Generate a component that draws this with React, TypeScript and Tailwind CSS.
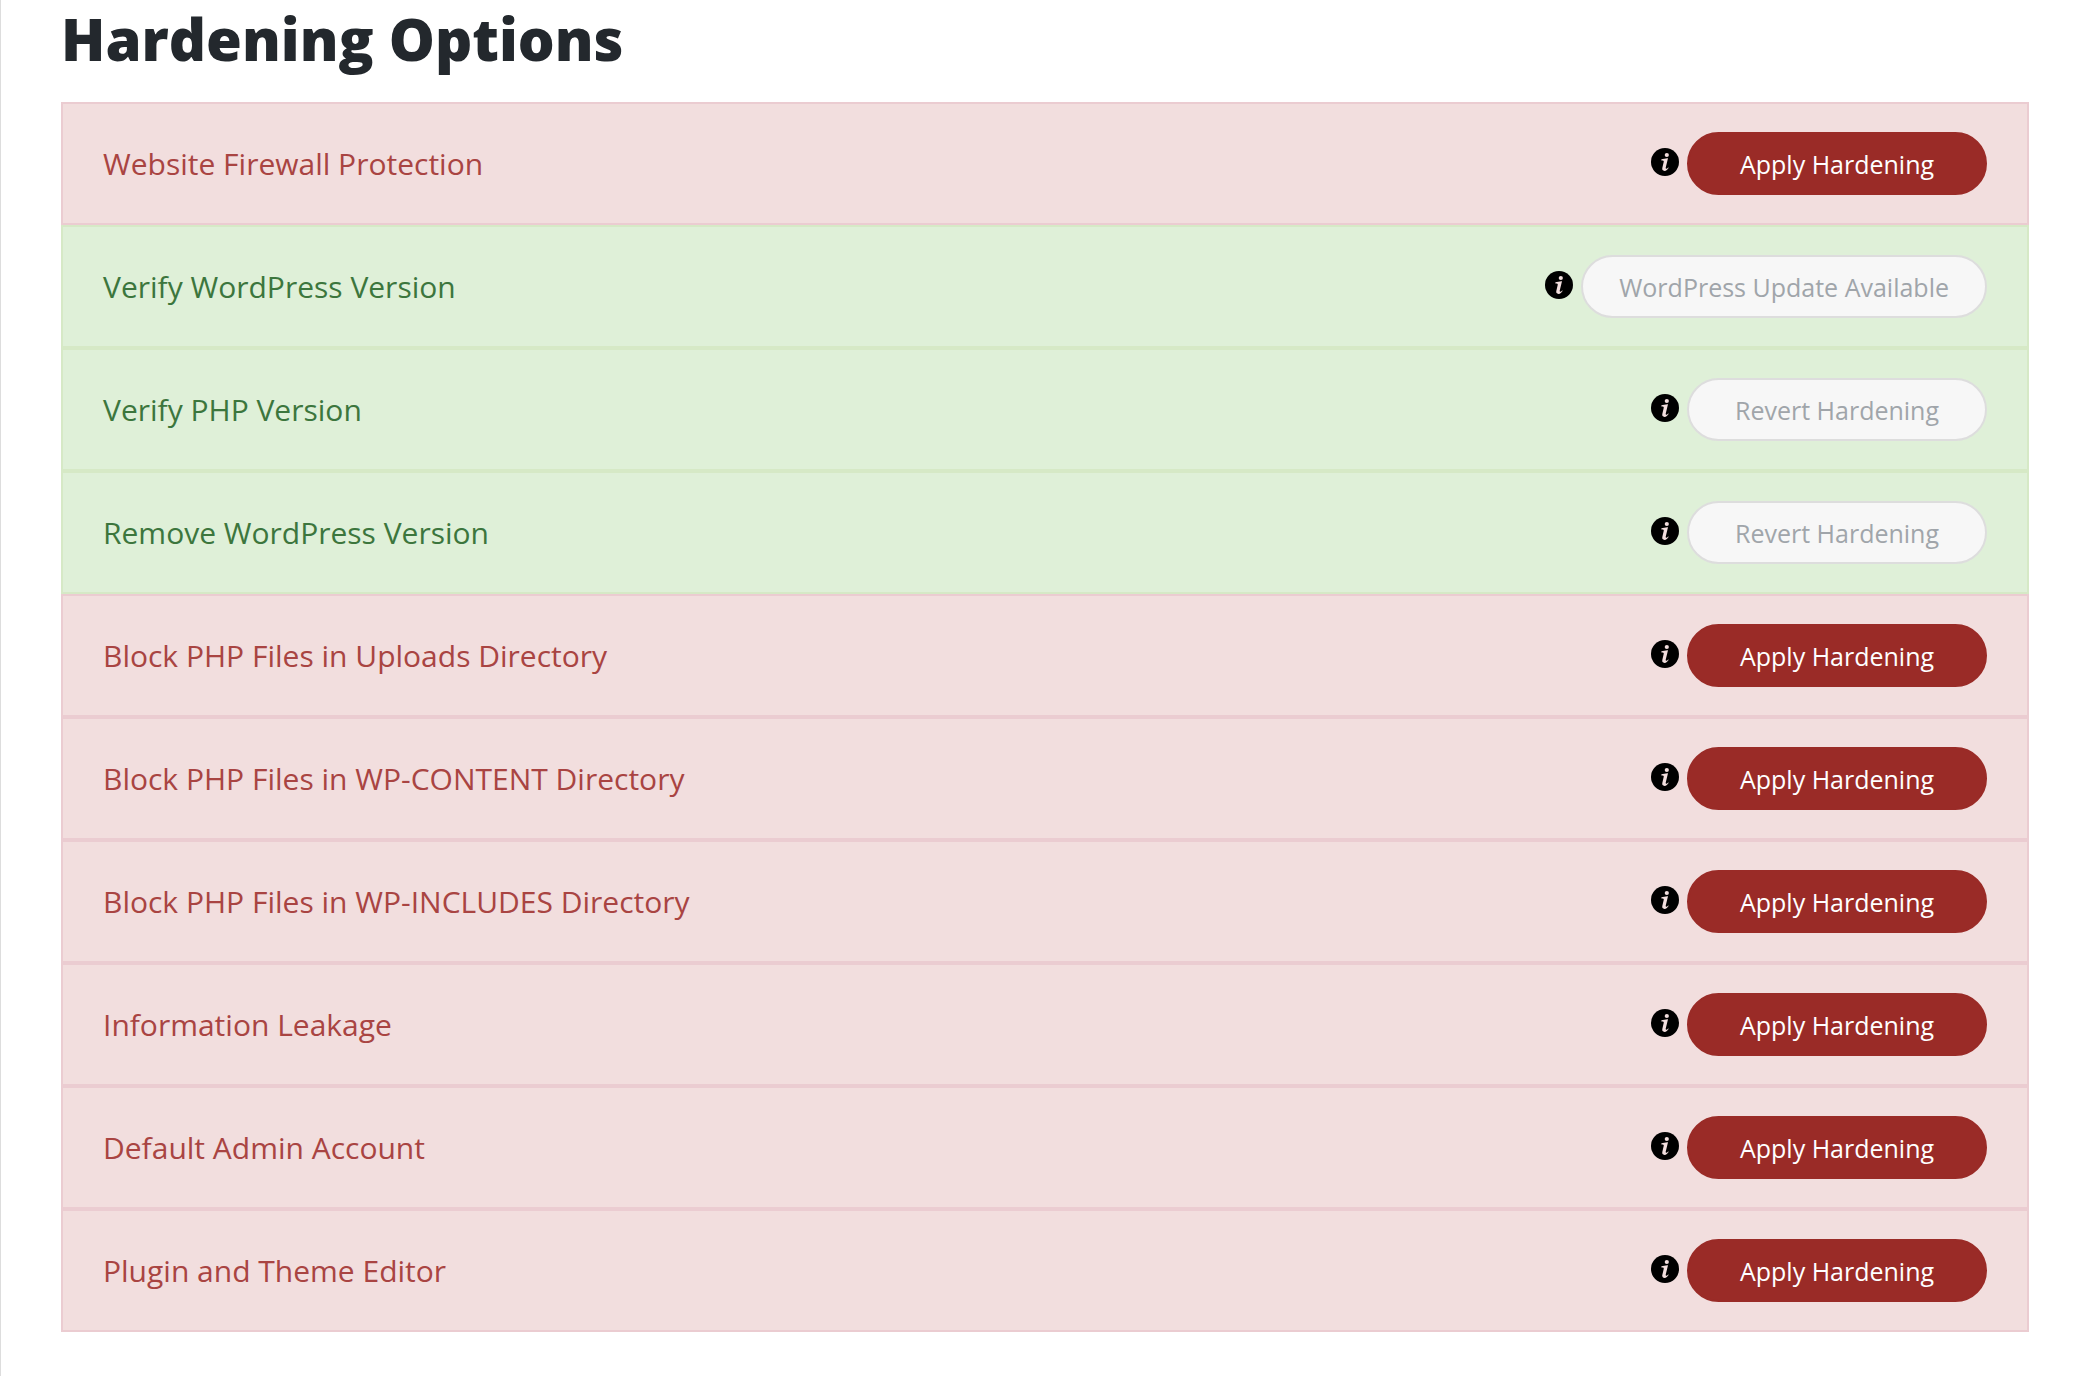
import { clsx } from "clsx";

type Status = "apply" | "revert" | "update";

const options: { title: string; status: Status }[] = [
  { title: "Website Firewall Protection", status: "apply" },
  { title: "Verify WordPress Version", status: "update" },
  { title: "Verify PHP Version", status: "revert" },
  { title: "Remove WordPress Version", status: "revert" },
  { title: "Block PHP Files in Uploads Directory", status: "apply" },
  { title: "Block PHP Files in WP-CONTENT Directory", status: "apply" },
  { title: "Block PHP Files in WP-INCLUDES Directory", status: "apply" },
  { title: "Information Leakage", status: "apply" },
  { title: "Default Admin Account", status: "apply" },
  { title: "Plugin and Theme Editor", status: "apply" },
];

const labels: Record<Status, string> = {
  apply: "Apply Hardening",
  revert: "Revert Hardening",
  update: "WordPress Update Available",
};

function InfoIcon() {
  return (
    <svg viewBox="0 0 28 28" className="size-7" aria-hidden="true">
      <circle cx="14" cy="14" r="14" fill="#000" />
      <circle cx="15.8" cy="7" r="2.1" fill="#f2dede" />
      <path
        d="M10.4 11.2c2-.1 3.8-.4 5.9-.9h.7l-2.2 9c-.2.9-.1 1.4.4 1.4.6 0 1.3-.5 1.9-1.3l.6.4c-1.1 1.9-2.5 3.1-4.2 3.1-1.7 0-2.6-1.1-2.2-2.8l1.4-6c.2-1 0-1.4-.9-1.5l-1.4-.1z"
        fill="#f2dede"
      />
    </svg>
  );
}

function OptionRow({ title, status }: { title: string; status: Status }) {
  const pending = status === "apply";

  return (
    <li
      className={clsx(
        "flex items-center justify-between border-2 px-10 py-7",
        pending ? "border-[#ebccd1] bg-[#f2dede] text-[#a94442]" : "border-[#d6e9c6] bg-[#dff0d8] text-[#3c763d]"
      )}
    >
      <h2 className="text-[30px] leading-10">{title}</h2>
      <div className="flex items-center gap-2">
        <button type="button" aria-label={`About ${title}`} className="mb-[3px] cursor-pointer">
          <InfoIcon />
        </button>
        <button
          type="button"
          disabled={!pending}
          className={clsx(
            "h-[63px] min-w-[300px] rounded-full border-2 px-9 text-[25px] leading-9",
            pending ? "cursor-pointer border-[#9a2b27] bg-[#9a2b27] text-white" : "border-[#dddddd] bg-[#f7f7f7] text-[#a0a5aa]"
          )}
        >
          {labels[status]}
        </button>
      </div>
    </li>
  );
}

export default function App() {
  return (
    <main className="min-h-screen border-l border-[#dddddd] bg-white pl-15 pr-[49px] font-['Segoe_UI','Open_Sans',sans-serif]">
      <h1 className="pb-6 text-[58px] leading-[78px] font-extrabold text-[#23282d]">Hardening Options</h1>
      <ul>
        {options.map((option) => (
          <OptionRow key={option.title} {...option} />
        ))}
      </ul>
    </main>
  );
}
